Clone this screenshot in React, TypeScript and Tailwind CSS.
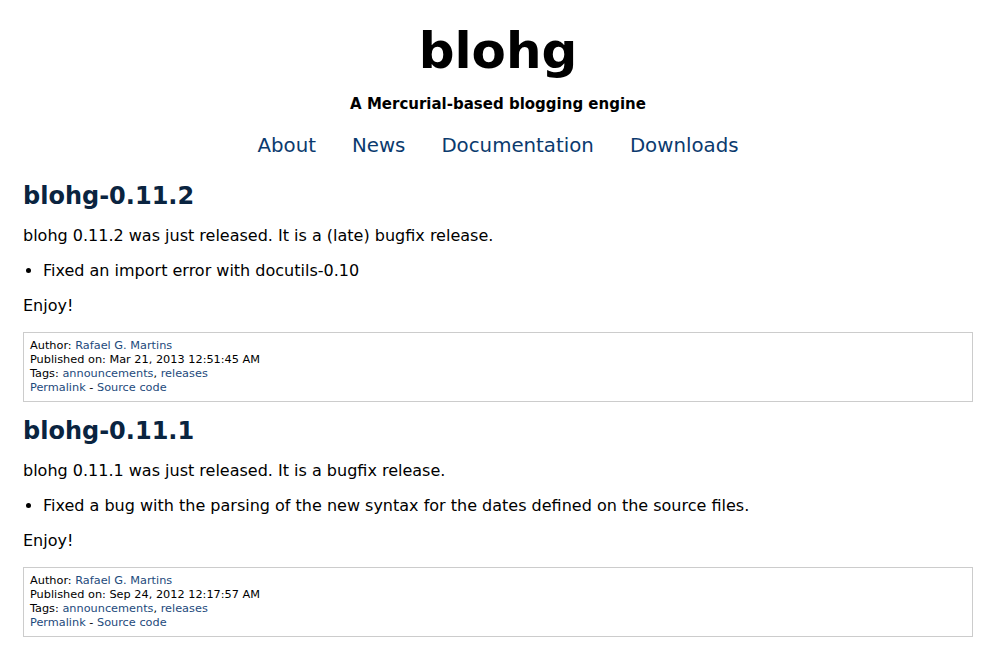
import React from 'react';

const posts = [
  {
    title: 'blohg-0.11.2',
    intro: 'blohg 0.11.2 was just released. It is a (late) bugfix release.',
    item: 'Fixed an import error with docutils-0.10',
    published: 'Mar 21, 2013 12:51:45 AM',
  },
  {
    title: 'blohg-0.11.1',
    intro: 'blohg 0.11.1 was just released. It is a bugfix release.',
    item: 'Fixed a bug with the parsing of the new syntax for the dates defined on the source files.',
    published: 'Sep 24, 2012 12:17:57 AM',
  },
];

const Post = ({ post }) => (
  <div className="mt-[14px] first:mt-0">
    <h2 className="text-[24px] leading-[30px] font-bold text-[#0a2440]">{post.title}</h2>
    <p className="mt-[15px] text-[16px] leading-[20px]">{post.intro}</p>
    <ul className="mt-[15px] list-disc pl-5 text-[16px] leading-[20px]">
      <li>{post.item}</li>
    </ul>
    <p className="mt-[15px] text-[16px] leading-[20px]">Enjoy!</p>
    <div className="mt-[16px] border border-[#cccccc] px-[6px] py-[6px] text-[11.3px] leading-[14px]">
      <div>
        Author: <a href="#" className="text-[#1d4a7c]">Rafael G. Martins</a>
      </div>
      <div>Published on: {post.published}</div>
      <div>
        Tags: <a href="#" className="text-[#1d4a7c]">announcements</a>,{' '}
        <a href="#" className="text-[#1d4a7c]">releases</a>
      </div>
      <div>
        <a href="#" className="text-[#1d4a7c]">Permalink</a> -{' '}
        <a href="#" className="text-[#1d4a7c]">Source code</a>
      </div>
    </div>
  </div>
);

export default function App() {
  return (
    <div className="min-h-screen bg-white pl-[23px] pr-[11px] text-black" style={{ fontFamily: '"DejaVu Sans", sans-serif' }}>
      <div className="flex flex-col items-center pt-[22px]">
        <h1 className="text-[50px] leading-[58px] font-bold">blohg</h1>
        <div className="mt-[14px] text-[15px] leading-[20px] font-bold">A Mercurial-based blogging engine</div>
        <nav className="mt-[20px] flex gap-[36px] text-[19.8px] leading-[24px] text-[#0b3a6e]">
          <a href="#">About</a>
          <a href="#">News</a>
          <a href="#">Documentation</a>
          <a href="#">Downloads</a>
        </nav>
      </div>
      <div className="mt-[23px]">
        {posts.map((p) => (
          <Post key={p.title} post={p} />
        ))}
      </div>
    </div>
  );
}
